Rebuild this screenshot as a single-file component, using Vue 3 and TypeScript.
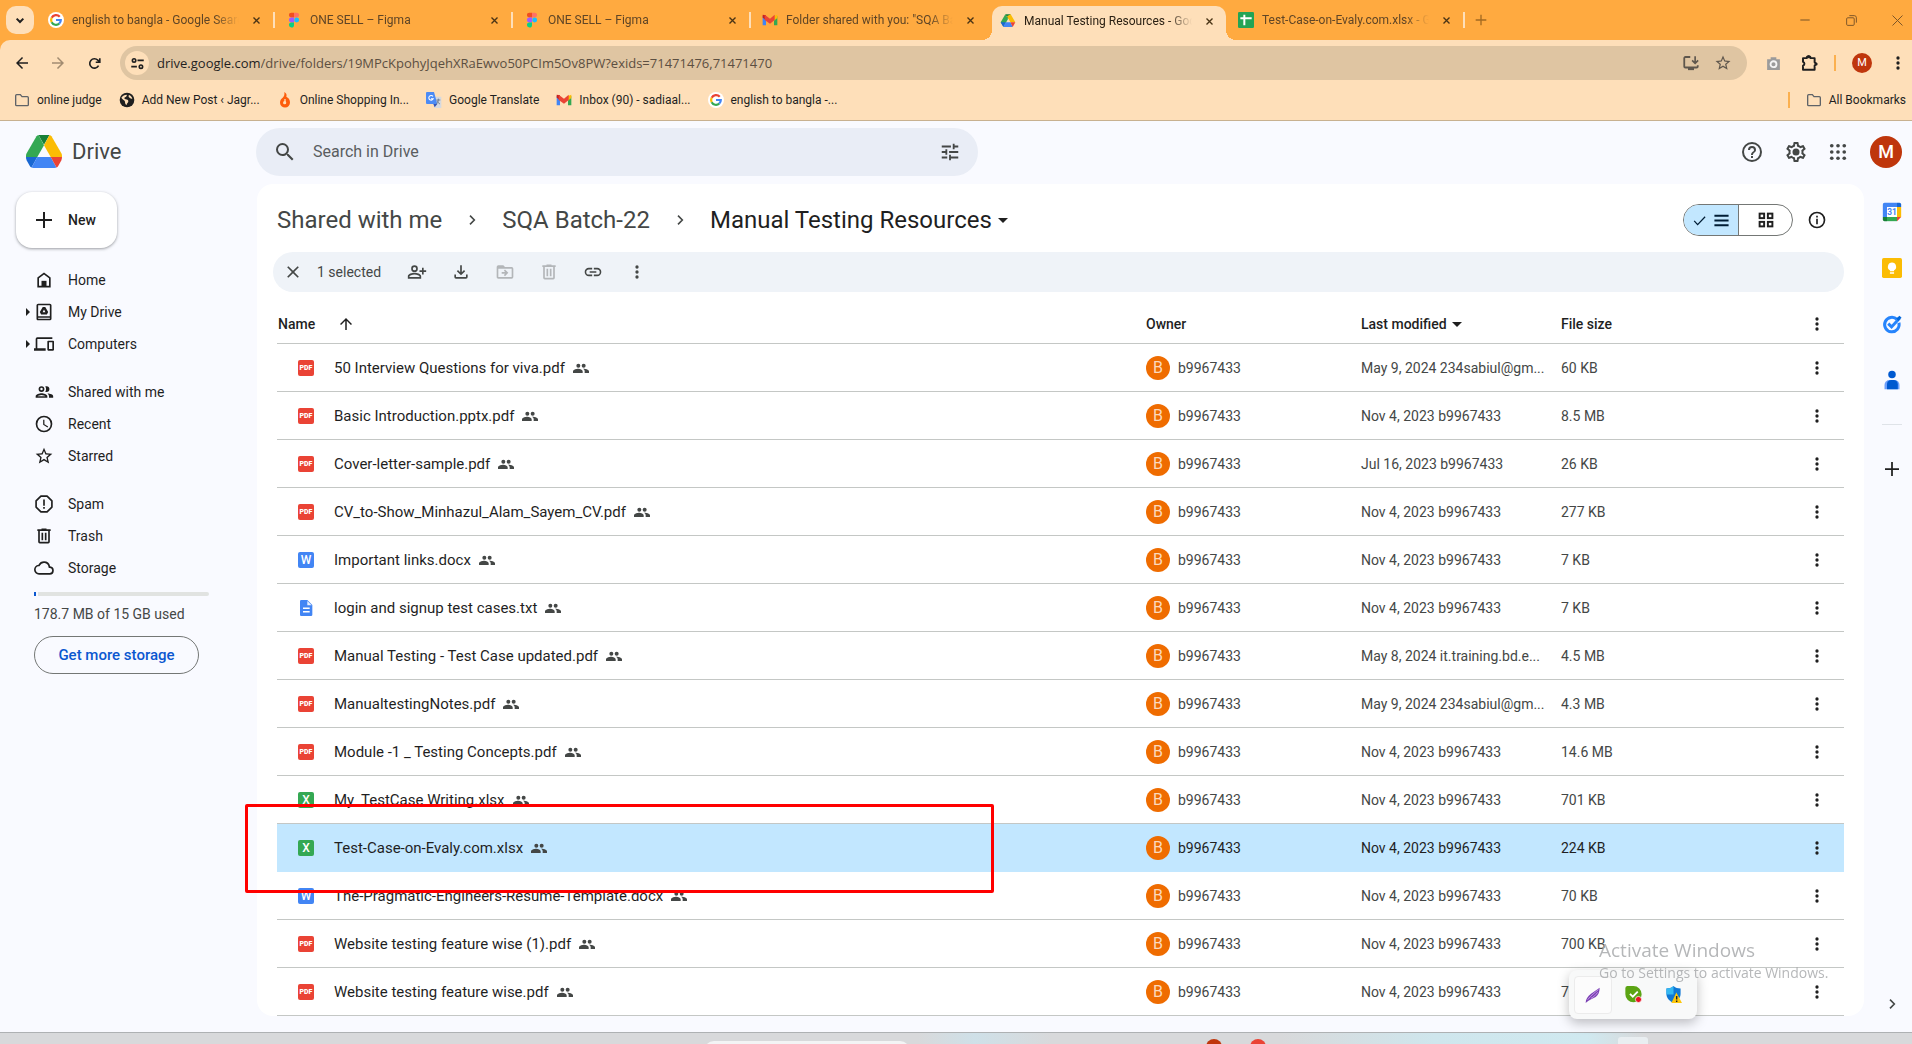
<script setup lang="ts">
import { h } from 'vue'

const art: Record<string, string> = {
  chevronDown: '<path d="M7 10l5 5 5-5" fill="none" stroke="currentColor" stroke-width="3"/>',
  chevronRight: '<path d="M9 5.500l6.500 6.500L9 18.500" fill="none" stroke="currentColor" stroke-width="2.400"/>',
  close: '<path d="M19 6.410L17.590 5 12 10.590 6.410 5 5 6.410 10.590 12 5 17.590 6.410 19 12 13.410 17.590 19 19 17.590 13.410 12z"/>',
  closeBold: '<path d="M4 4l16 16M20 4L4 20" fill="none" stroke="currentColor" stroke-width="3.600"/>',
  thinClose: '<path d="M4 4l16 16M20 4L4 20" fill="none" stroke="currentColor" stroke-width="1.600"/>',
  minimise: '<path d="M4 12h16" stroke="currentColor" stroke-width="1.800"/>',
  restore: '<g fill="none" stroke="currentColor" stroke-width="1.800"><rect x="3" y="7" width="14" height="14" rx="2"/><path d="M8 3h9a4 4 0 0 1 4 4v9"/></g>',
  plus: '<path d="M13 4h-2v7H4v2h7v7h2v-7h7v-2h-7z"/>',
  back: '<path d="M20 11H7.830l5.590-5.590L12 4l-8 8 8 8 1.410-1.410L7.830 13H20z"/>',
  forward: '<path d="M4 13h12.170l-5.590 5.590L12 20l8-8-8-8-1.410 1.410L16.170 11H4z"/>',
  up: '<path d="M11 20V7.830l-5.590 5.590L4 12l8-8 8 8-1.410 1.410L13 7.830V20z"/>',
  reload: '<path d="M18.500 15.500A7.500 7.500 0 1 1 17.300 6.700L20 9.400M20.500 3.500v6.500H14" fill="none" stroke="currentColor" stroke-width="2.600"/>',
  tuneSmall: '<g fill="none" stroke="currentColor" stroke-width="2.600"><circle cx="6.500" cy="7" r="2.700"/><path d="M12 7h10M2 17h9"/><circle cx="17.500" cy="17" r="2.700"/></g>',
  install: '<path d="M11 4H4.500A1.500 1.500 0 0 0 3 5.500v11A1.500 1.500 0 0 0 4.500 18h15a1.500 1.500 0 0 0 1.500-1.500V15" fill="none" stroke="currentColor" stroke-width="2.400"/><path d="M8 18h8v3.500H8z"/><path d="M17.500 3v9M13.500 8.500l4 4 4-4" fill="none" stroke="currentColor" stroke-width="2.200"/>',
  star: '<path d="M22 9.240l-7.190-.620L12 2 9.190 8.630 2 9.240l5.460 4.730L5.820 21 12 17.270 18.180 21l-1.630-7.030L22 9.240zM12 15.400l-3.760 2.270 1-4.280-3.320-2.880 4.380-.380L12 6.100l1.710 4.040 4.380.380-3.320 2.880 1 4.280L12 15.400z"/>',
  camera: '<path d="M8 3h8v3h5v15H3V6h5z"/><circle cx="12" cy="13" r="4.200" fill="none" stroke="#f4f4f4" stroke-width="2.600"/>',
  puzzle: '<path d="M4 5.500h5a2.500 2.500 0 0 1 5 0h5.500v5.500a2.500 2.500 0 0 1 0 4.500v5.500H4v-5.500a2.600 2.600 0 0 0 0-5z" fill="none" stroke="currentColor" stroke-width="2.600" stroke-linejoin="round"/><circle cx="11.500" cy="3.500" r="2"/><circle cx="21.500" cy="13.200" r="2"/>',
  dots: '<circle cx="12" cy="6" r="2"/><circle cx="12" cy="12" r="2"/><circle cx="12" cy="18" r="2"/>',
  folder: '<path d="M2.500 19V5.500A1.500 1.500 0 0 1 4 4h5.500l2.500 3h8a1.500 1.500 0 0 1 1.500 1.500V19a1.500 1.500 0 0 1-1.500 1.500H4A1.500 1.500 0 0 1 2.500 19z" fill="none" stroke="currentColor" stroke-width="2"/>',
  globe: '<circle cx="12" cy="12" r="11"/><path d="M3.500 8.500c2-3 5-4.500 8-4.500 1 2-1 3-2.500 4s-1 2.500 1 3 4 .5 4 3-2.500 2.500-2.500 5.500c-2-.5-2.500-3-2.500-5s-4-3-5.500-6zM15 4.500c2.500 1 4.500 3 5 5.500-2 .5-3.500-.5-5-2-.8-1-.8-2.500 0-3.500z" fill="#fedfb9"/>',
  fire: '<path d="M11 0c3 2 4 4 3 7 3 1.500 5.500 4 5.500 8.500a7.500 7.500 0 0 1-15 .5c0-3.500 1.500-6 4-7.500C11 6.500 11.500 4 11 0z" fill="#fd5d0c"/><path d="M12 10.500v7" stroke="#fedfb9" stroke-width="2"/><circle cx="11.500" cy="16" r="2.400" fill="#fedfb9"/>',
  google: '<circle cx="12" cy="12" r="12" fill="#fff"/><g fill="none" stroke-width="3.300"><path d="M17.600 7.100A7.300 7.300 0 0 0 5.500 8.700" stroke="#ea4335"/><path d="M5.500 8.700a7.300 7.300 0 0 0 0 6.600" stroke="#fbbc05"/><path d="M5.500 15.300a7.300 7.300 0 0 0 11.300 2.200" stroke="#34a853"/><path d="M16.800 17.500a7.300 7.300 0 0 0 2.400-5.500H12" stroke="#4285f4"/></g>',
  figma: '<path d="M8 1h4v7.330H8a3.660 3.660 0 0 1 0-7.330z" fill="#f24e1e"/><path d="M12 1h4a3.660 3.660 0 0 1 0 7.330h-4z" fill="#ff7262"/><path d="M8 8.330h4v7.330H8a3.660 3.660 0 0 1 0-7.330z" fill="#a259ff"/><circle cx="16" cy="12" r="3.700" fill="#1abcfe"/><path d="M8 15.660h4v3.670a3.800 3.800 0 1 1-4-3.670z" fill="#0acf83"/>',
  gmail: '<path d="M1 6v14h5V11z" fill="#4285f4"/><path d="M23 6v14h-5V11z" fill="#34a853"/><path d="M18 6l5-2v5l-5 4z" fill="#fbbc04"/><path d="M1 4l5 1v7L1 8.500z" fill="#c5221f"/><path d="M4 4l8 6 7-6v8l-7 5.500L4 12z" fill="#ea4335"/>',
  drive: '<path d="M8 2h8l-4 7z" fill="#188038"/><path d="M8 2l4 7-6.600 11.500L1 14z" fill="#34a853"/><path d="M16 2l7 12h-7.300L12 7.500 10.500 5z" fill="#fbbc04"/><path d="M1 14h7.500L5 21z" fill="#1967d2"/><path d="M8.300 14h7.400L19 21H5z" fill="#4285f4"/><path d="M15.700 14H23l-4 7z" fill="#ea4335"/>',
  driveLogo: '<path d="M14.500 2h11L20 11.800z" fill="#188038"/><path d="M14.500 2a3 3 0 0 0-2 1.300L2.500 20.500C2 21.500 2 23 2 24h11.300L20 12.200z" fill="#34a853"/><path d="M25.500 2a3 3 0 0 1 2 1.300l10 17.200c.5 1 .5 2.500.5 3.500H26.700L20 12.200z" fill="#fbbc04"/><path d="M2 24h11.300L7.500 34.500c-.7-.3-1.200-.8-1.700-1.500L2.700 27.500C2.200 26.500 2 25 2 24z" fill="#1967d2"/><path d="M13.300 24h13.400l5.800 10.500c-.5.300-1 .5-2 .5h-21c-1 0-1.500-.2-2-.5z" fill="#4285f4"/><path d="M38 24H26.700l5.800 10.500c.7-.3 1.200-.8 1.700-1.500l3.100-5.500c.5-1 .7-2.500.7-3.500z" fill="#ea4335"/>',
  sheets: '<rect width="24" height="24" rx="2" fill="#23a455"/><path d="M9.500 4v16M3.500 9.500h17" stroke="#fff" stroke-width="3" fill="none"/>',
  translate: '<path d="M9 7h14v17H13z" fill="#d5d9e0"/><path d="M1.500 0H12l5 18H1.500A1.500 1.500 0 0 1 0 16.500v-15A1.500 1.500 0 0 1 1.500 0z" fill="#4c8bf5"/><path d="M11 18h6l-4 5z" fill="#3455b5"/><path d="M10.500 6.500A3.500 3.500 0 1 0 11 10H7.500" fill="none" stroke="#fff" stroke-width="1.600"/><path d="M15.500 12h6M18.500 10v2c0 3-1 4-3 6M17 13c0 2 2 4 4 5" fill="none" stroke="#6b7a90" stroke-width="1.300"/>',
  search: '<path d="M15.500 14h-.790l-.280-.270A6.470 6.470 0 0 0 16 9.500 6.500 6.500 0 1 0 9.500 16c1.610 0 3.090-.590 4.230-1.570l.270.280v.790l5 4.990L20.490 19l-4.990-5zm-6 0a4.500 4.500 0 1 1 0-9 4.500 4.500 0 0 1 0 9z"/>',
  tune: '<path d="M3 17v2h6v-2H3zM3 5v2h10V5H3zm10 16v-2h8v-2h-8v-2h-2v6h2zM7 9v2H3v2h4v2h2V9H7zm14 4v-2H11v2h10zm-6-4h2V7h4V5h-4V3h-2v6z"/>',
  help: '<path d="M11 18h2v-2h-2v2zm1-16a10 10 0 1 0 0 20 10 10 0 0 0 0-20zm0 18a8 8 0 1 1 0-16 8 8 0 0 1 0 16zm0-14a4 4 0 0 0-4 4h2a2 2 0 1 1 4 0c0 2-3 1.750-3 5h2c0-2.250 3-2.500 3-5a4 4 0 0 0-4-4z"/>',
  gear: '<path d="M19.430 12.980c.040-.320.070-.640.070-.980s-.030-.660-.070-.980l2.110-1.650c.190-.150.240-.420.120-.640l-2-3.460a.500.500 0 0 0-.610-.220l-2.490 1c-.520-.400-1.080-.730-1.690-.980l-.380-2.650A.490.490 0 0 0 14 2h-4a.490.490 0 0 0-.490.420l-.380 2.650c-.610.250-1.170.590-1.690.980l-2.490-1a.500.500 0 0 0-.610.220l-2 3.460c-.130.220-.070.490.120.640l2.110 1.650a7.900 7.900 0 0 0 0 1.960l-2.110 1.650c-.190.150-.240.420-.120.640l2 3.460c.120.220.390.300.610.220l2.490-1c.520.400 1.080.730 1.690.980l.380 2.650c.030.240.240.420.490.420h4c.250 0 .460-.180.490-.420l.380-2.650c.610-.250 1.170-.590 1.690-.980l2.490 1c.230.090.490 0 .610-.220l2-3.460c.120-.220.070-.490-.120-.640l-2.110-1.650zm-1.980-1.710a5.500 5.500 0 0 1 0 1.460l-.140 1.130 1.970 1.540-.700 1.210-2.310-.930-.900.680c-.430.320-.840.560-1.250.730l-1.060.430-.360 2.480h-1.400l-.350-2.480-1.060-.430c-.430-.180-.830-.410-1.230-.710l-.910-.700-2.330.940-.700-1.210 1.970-1.540-.140-1.130a6 6 0 0 1 0-1.470l.140-1.130-1.970-1.540.700-1.210 2.310.930.900-.680c.430-.320.840-.560 1.250-.730l1.060-.430.360-2.480h1.390l.350 2.480 1.060.430c.430.180.830.410 1.230.710l.910.700 2.330-.940.700 1.210-1.960 1.550z"/><circle cx="12" cy="12" r="3.500"/>',
  apps: '<g><circle cx="4.500" cy="4.500" r="2.200"/><circle cx="12" cy="4.500" r="2.200"/><circle cx="19.500" cy="4.500" r="2.200"/><circle cx="4.500" cy="12" r="2.200"/><circle cx="12" cy="12" r="2.200"/><circle cx="19.500" cy="12" r="2.200"/><circle cx="4.500" cy="19.500" r="2.200"/><circle cx="12" cy="19.500" r="2.200"/><circle cx="19.500" cy="19.500" r="2.200"/></g>',
  home: '<path d="M12 3L4 9v12h16V9zm6 16H6v-9l6-4.500L18 10z"/><path d="M9 13h6v7H9z"/>',
  myDrive: '<path d="M19 2H5a2 2 0 0 0-2 2v16c0 1.100.9 2 2 2h14a2 2 0 0 0 2-2V4a2 2 0 0 0-2-2zm0 18H5v-1h14zm0-3H5V4h14z"/><path d="M10.500 6h3l3.500 6-1.500 3h-7L7 12zm1.500 3l-1.700 3.200h3.400z" fill-rule="evenodd"/>',
  computers: '<path d="M4 6h18V4H4a2 2 0 0 0-2 2v11H0v3h14v-3H4V6zm19 2h-6c-.550 0-1 .450-1 1v10c0 .550.450 1 1 1h6c.550 0 1-.450 1-1V9c0-.550-.450-1-1-1zm-1 10h-4v-8h4z"/>',
  people: '<path d="M9 13.500c-2.340 0-7 1.170-7 3.500V19h14v-2c0-2.330-4.660-3.500-7-3.500zM4.340 17c.840-.580 2.870-1.500 4.660-1.500s3.820.920 4.660 1.500zM9 12a3.500 3.500 0 1 0 0-7 3.500 3.500 0 0 0 0 7zm0-5a1.500 1.500 0 1 1 0 3 1.500 1.500 0 0 1 0-3zm7.040 6.810c1.160.840 1.960 1.960 1.960 3.190v2h5v-2c0-2.020-3.500-3.170-6.960-3.190zM15 12a3.500 3.500 0 1 0 0-7c-.540 0-1.040.130-1.500.350.630.890 1 1.980 1 3.150s-.370 2.260-1 3.150c.460.220.960.350 1.500.350z"/>',
  clock: '<path d="M12 2a10 10 0 1 0 0 20 10 10 0 0 0 0-20zm0 18a8 8 0 1 1 0-16 8 8 0 0 1 0 16zm.5-13H11v6l5.200 3.200.8-1.300-4.500-2.700z"/>',
  spam: '<path d="M8.300 2.500h7.400L21.500 8.300v7.400l-5.800 5.800H8.300l-5.800-5.800V8.300z" fill="none" stroke="currentColor" stroke-width="2" stroke-linejoin="round"/><path d="M11 6.500h2V14h-2zM11 15.700h2v2h-2z"/>',
  trash: '<path d="M15 4V3H9v1H4v2h1v13a2 2 0 0 0 2 2h10a2 2 0 0 0 2-2V6h1V4zm2 15H7V6h10zM9 8h2v9H9zm4 0h2v9h-2z"/>',
  cloud: '<path d="M19.350 10.040A7.490 7.490 0 0 0 12 4a7.500 7.500 0 0 0-6.650 4.040A6 6 0 0 0 6 20h13a5 5 0 0 0 .350-9.960zM19 18H6a4 4 0 0 1-.440-7.970l1.070-.110.500-.950A5.480 5.480 0 0 1 17.390 10.430l.300 1.500 1.530.110A3 3 0 0 1 19 18z"/>',
  personAdd: '<path d="M9 12a4 4 0 1 0 0-8 4 4 0 0 0 0 8zm0-6a2 2 0 1 1 0 4 2 2 0 0 1 0-4zm0 7c-2.670 0-8 1.340-8 4v3h16v-3c0-2.660-5.330-4-8-4zm6 5H3v-1c0-.640 3.100-2 6-2s6 1.360 6 2zm5-8V7h-2v3h-3v2h3v3h2v-3h3v-2z"/>',
  download: '<path d="M11 4h2v8.200l2.600-2.600L17 11l-5 5-5-5 1.400-1.400 2.600 2.600zM4 15h2v3h12v-3h2v3a2 2 0 0 1-2 2H6a2 2 0 0 1-2-2z"/>',
  move: '<path d="M20 6h-8l-2-2H4a2 2 0 0 0-2 2v12c0 1.100.9 2 2 2h16a2 2 0 0 0 2-2V8a2 2 0 0 0-2-2zm0 12H4V8h16zm-8-1l4-4-4-4-1.400 1.400 1.600 1.600H8v2h4.200l-1.600 1.600z"/>',
  link: '<path d="M3.900 12A3.100 3.100 0 0 1 7 8.900h4V7H7a5 5 0 0 0 0 10h4v-1.900H7A3.100 3.100 0 0 1 3.900 12zM8 13h8v-2H8zm9-6h-4v1.900h4a3.100 3.100 0 0 1 0 6.200h-4V17h4a5 5 0 0 0 0-10z"/>',
  check: '<path d="M3.500 12.500l5.500 6L21 6" fill="none" stroke="currentColor" stroke-width="2"/>',
  list: '<path d="M2 4h20v2.800H2zM2 10.600h20v2.800H2zM2 17.200h20V20H2z"/>',
  grid: '<g fill="none" stroke="currentColor" stroke-width="2.600"><rect x="3.500" y="3.500" width="6" height="6"/><rect x="14.500" y="3.500" width="6" height="6"/><rect x="3.500" y="14.500" width="6" height="6"/><rect x="14.500" y="14.500" width="6" height="6"/></g>',
  info: '<path d="M11 10.500h2V17h-2zM11 7h2v2h-2zm1-5a10 10 0 1 0 0 20 10 10 0 0 0 0-20zm0 18a8 8 0 1 1 0-16 8 8 0 0 1 0 16z"/>',
  group: '<path d="M8 11.500a3 3 0 1 0 0-6 3 3 0 0 0 0 6zm8 0a3 3 0 1 0 0-6 3 3 0 0 0 0 6zM8 13.200c-2.700 0-8 1.300-8 3.800v2.500h14.500V17c0-2.500-4-3.800-6.500-3.800zm8 0h-1.200c1.800 1 2.700 2.200 2.700 3.800v2.500H24V17c0-2.500-5.300-3.800-8-3.800z"/>',
  doc: '<path d="M14 0H5a2 2 0 0 0-2 2v20c0 1.100.9 2 2 2h14.500a2 2 0 0 0 2-2V7.500z" fill="#4285f4"/><path d="M14 1.500V8h6.500z" fill="#e8f0fe"/><path d="M7.500 12.500h10M7.500 17.500h10" stroke="#fff" stroke-width="2.200"/>',
  calendar: '<path d="M1 3a2 2 0 0 1 2-2h15v5H6v12H1z" fill="#4285f4"/><path d="M18 1h3a2 2 0 0 1 2 2v3h-5z" fill="#1967d2"/><path d="M18 6h5v12h-5z" fill="#fbbc04"/><path d="M6 18h12v5H6z" fill="#34a853"/><path d="M1 18h5v5H3a2 2 0 0 1-2-2z" fill="#188038"/><path d="M18 18h5l-5 5z" fill="#ea4335"/><path d="M6 6h12v12H6z" fill="#fff"/><text x="12" y="15.500" text-anchor="middle" font-size="10" font-weight="700" fill="#4285f4">31</text>',
  keep: '<rect width="24" height="24" rx="2" fill="#fbbc04"/><path d="M12 5.500a5 5 0 0 0-2.500 9.300V16h5v-1.200A5 5 0 0 0 12 5.500zM9.500 17.200h5V19h-5z" fill="#fff"/>',
  tasks: '<path d="M18 6.500a8.700 8.700 0 1 0 2.300 4" fill="none" stroke="#2684fc" stroke-width="3.600"/><path d="M7.500 11.500l4 4L21 5" fill="none" stroke="#2684fc" stroke-width="3.600"/><path d="M17 5.500l4-3.500 2.500 2.500-4 4z" fill="#0066da"/>',
  contact: '<circle cx="12" cy="5.500" r="4.500" fill="#0059d0"/><path d="M3 23v-5a6 6 0 0 1 6-6h6a6 6 0 0 1 6 6v5z" fill="#6d9ffb"/><path d="M6 23v-6a5 5 0 0 1 5-5h3a5 5 0 0 1 5 5v6z" fill="#0059d0"/>',
  feather: '<path d="M1 24c0-6 3-10 8-14 4-3 9-6 13-9 0 6-2 11-6 14-5 3-10 4-15 9z" fill="#7d44b5"/><path d="M4 19C9 13 15 8 20 4M9 17c4-2 7-5 10-9" stroke="#c79ae8" stroke-width="1.400" fill="none"/>',
  greenCheck: '<path d="M3 0h9a11.500 11.500 0 1 1-11.500 11.500V3A3 3 0 0 1 3 0z" fill="#5ba413"/><path d="M7 11l4 4 7-7" stroke="#fff" stroke-width="2.600" fill="none"/><circle cx="19" cy="19" r="4.300" fill="#e81123" stroke="#fff"/>',
  shield: '<path d="M12 0c3 2.500 6 3.500 10 3.500V11c0 6-4 10-10 13C6 21 2 17 2 11V3.500C6 3.500 9 2.500 12 0z" fill="#0f77d4"/><path d="M12 0v12H2V3.500C6 3.500 9 2.500 12 0z" fill="#35b8f1"/><path d="M16 9l8 15H9z" fill="#fdc70c"/><path d="M16.500 14v5M16.500 20.500v2" stroke="#222" stroke-width="2"/>'
}

const Icon = (props: { name: string; size?: number; box?: string }) =>
  h('svg', {
    width: props.size ?? 20,
    height: props.size ?? 20,
    viewBox: props.box ?? '0 0 24 24',
    fill: 'currentColor',
    'aria-hidden': 'true',
    innerHTML: art[props.name]
  })
Icon.props = ['name', 'size', 'box']

const tabs = [
  { icon: 'google', title: 'english to bangla - Google Search' },
  { icon: 'figma', title: 'ONE SELL – Figma' },
  { icon: 'figma', title: 'ONE SELL – Figma' },
  { icon: 'gmail', title: 'Folder shared with you: "SQA Batch-22"' },
  { icon: 'drive', title: 'Manual Testing Resources - Google Drive', active: true },
  { icon: 'sheets', title: 'Test-Case-on-Evaly.com.xlsx - Google Sheets' }
]

const bookmarks = [
  { icon: 'folder', label: 'online judge' },
  { icon: 'globe', label: 'Add New Post ‹ Jagr...' },
  { icon: 'fire', label: 'Online Shopping In...' },
  { icon: 'translate', label: 'Google Translate' },
  { icon: 'gmail', label: 'Inbox (90) - sadiaal...' },
  { icon: 'google', label: 'english to bangla -...' }
]

const navGroups = [
  [
    { icon: 'home', label: 'Home' },
    { icon: 'myDrive', label: 'My Drive', expandable: true },
    { icon: 'computers', label: 'Computers', expandable: true }
  ],
  [
    { icon: 'people', label: 'Shared with me' },
    { icon: 'clock', label: 'Recent' },
    { icon: 'star', label: 'Starred' }
  ],
  [
    { icon: 'spam', label: 'Spam' },
    { icon: 'trash', label: 'Trash' },
    { icon: 'cloud', label: 'Storage' }
  ]
]

const actions = [
  { icon: 'personAdd', label: 'Share' },
  { icon: 'download', label: 'Download' },
  { icon: 'move', label: 'Move', disabled: true },
  { icon: 'trash', label: 'Remove', disabled: true },
  { icon: 'link', label: 'Copy link' },
  { icon: 'dots', label: 'More actions' }
]

type Kind = 'pdf' | 'word' | 'text' | 'excel'
interface FileRow {
  name: string
  kind: Kind
  modified: string
  size: string
  selected?: boolean
}

const badge: Record<Kind, string> = { pdf: 'PDF', word: 'W', text: '', excel: 'X' }

const files: FileRow[] = [
  { name: '50 Interview Questions for viva.pdf', kind: 'pdf', modified: 'May 9, 2024 234sabiul@gm...', size: '60 KB' },
  { name: 'Basic Introduction.pptx.pdf', kind: 'pdf', modified: 'Nov 4, 2023 b9967433', size: '8.5 MB' },
  { name: 'Cover-letter-sample.pdf', kind: 'pdf', modified: 'Jul 16, 2023 b9967433', size: '26 KB' },
  { name: 'CV_to-Show_Minhazul_Alam_Sayem_CV.pdf', kind: 'pdf', modified: 'Nov 4, 2023 b9967433', size: '277 KB' },
  { name: 'Important links.docx', kind: 'word', modified: 'Nov 4, 2023 b9967433', size: '7 KB' },
  { name: 'login and signup test cases.txt', kind: 'text', modified: 'Nov 4, 2023 b9967433', size: '7 KB' },
  { name: 'Manual Testing - Test Case updated.pdf', kind: 'pdf', modified: 'May 8, 2024 it.training.bd.e...', size: '4.5 MB' },
  { name: 'ManualtestingNotes.pdf', kind: 'pdf', modified: 'May 9, 2024 234sabiul@gm...', size: '4.3 MB' },
  { name: 'Module -1 _ Testing Concepts.pdf', kind: 'pdf', modified: 'Nov 4, 2023 b9967433', size: '14.6 MB' },
  { name: 'My_TestCase Writing.xlsx', kind: 'excel', modified: 'Nov 4, 2023 b9967433', size: '701 KB' },
  { name: 'Test-Case-on-Evaly.com.xlsx', kind: 'excel', modified: 'Nov 4, 2023 b9967433', size: '224 KB', selected: true },
  { name: 'The-Pragmatic-Engineers-Resume-Template.docx', kind: 'word', modified: 'Nov 4, 2023 b9967433', size: '70 KB' },
  { name: 'Website testing feature wise (1).pdf', kind: 'pdf', modified: 'Nov 4, 2023 b9967433', size: '700 KB' },
  { name: 'Website testing feature wise.pdf', kind: 'pdf', modified: 'Nov 4, 2023 b9967433', size: '700 KB' }
]

const sideApps = [
  { icon: 'calendar', label: 'Calendar' },
  { icon: 'keep', label: 'Keep' },
  { icon: 'tasks', label: 'Tasks' },
  { icon: 'contact', label: 'Contacts' }
]
</script>

<template>
  <div class="screen">
    <header class="browser">
      <div class="tabstrip">
        <button class="tab-search" aria-label="Search tabs"><Icon name="chevronDown" :size="16" /></button>
        <div v-for="(tab, i) in tabs" :key="i" class="tab" :class="{ active: tab.active, bare: tabs[i + 1]?.active }">
          <Icon :name="tab.icon" :size="16" />
          <span class="tab-title">{{ tab.title }}</span>
          <button class="tab-close" aria-label="Close tab"><Icon name="closeBold" :size="9" /></button>
        </div>
        <button class="new-tab" aria-label="New tab"><Icon name="plus" :size="16" /></button>
        <div class="window-controls">
          <button aria-label="Minimise"><Icon name="minimise" :size="14" /></button>
          <button aria-label="Restore"><Icon name="restore" :size="13" /></button>
          <button aria-label="Close"><Icon name="thinClose" :size="15" /></button>
        </div>
      </div>

      <div class="toolbar">
        <button class="tool" aria-label="Back"><Icon name="back" :size="18" /></button>
        <button class="tool dim" aria-label="Forward"><Icon name="forward" :size="18" /></button>
        <button class="tool" aria-label="Reload"><Icon name="reload" :size="15" /></button>
        <div class="omnibox">
          <button class="site-info" aria-label="Site information"><Icon name="tuneSmall" :size="15" /></button>
          <label class="host" for="address">drive.google.com</label>
          <input id="address" class="address" type="text" value="/drive/folders/19MPcKpohyJqehXRaEwvo50PCIm5Ov8PW?exids=71471476,71471470" />
          <button class="omni-action" aria-label="Install app"><Icon name="install" :size="18" /></button>
          <button class="omni-action" aria-label="Bookmark"><Icon name="star" :size="18" /></button>
        </div>
        <div class="extensions">
          <button class="ext camera" aria-label="Screenshot"><Icon name="camera" :size="17" /></button>
          <button class="ext" aria-label="Extensions"><Icon name="puzzle" :size="18" /></button>
          <span class="bar"></span>
          <button class="profile" aria-label="Profile">M</button>
          <button class="ext" aria-label="Menu"><Icon name="dots" :size="20" /></button>
        </div>
      </div>

      <nav class="bookmarks">
        <a v-for="b in bookmarks" :key="b.label" href="#" class="bookmark" :class="b.icon">
          <Icon :name="b.icon" :size="16" />{{ b.label }}
        </a>
        <span class="bar push"></span>
        <a href="#" class="bookmark folder"><Icon name="folder" :size="16" />All Bookmarks</a>
      </nav>
    </header>

    <div class="drive">
      <header class="drive-header">
        <a href="#" class="brand"><Icon name="driveLogo" :size="40" box="0 0 40 38" />Drive</a>
        <form class="search" @submit.prevent>
          <Icon name="search" :size="24" />
          <input type="search" placeholder="Search in Drive" aria-label="Search in Drive" />
          <button type="button" aria-label="Advanced search"><Icon name="tune" :size="22" /></button>
        </form>
        <div class="account">
          <button aria-label="Help"><Icon name="help" :size="24" /></button>
          <button aria-label="Settings"><Icon name="gear" :size="24" /></button>
          <button aria-label="Google apps"><Icon name="apps" :size="20" /></button>
          <button class="avatar" aria-label="Account">M</button>
        </div>
      </header>

      <div class="workspace">
        <aside class="sidebar">
          <button class="new"><Icon name="plus" :size="18" box="3 3 18 18" />New</button>
          <nav>
            <ul v-for="(group, g) in navGroups" :key="g">
              <li v-for="item in group" :key="item.label">
                <a href="#">
                  <span class="expander" :class="{ shown: item.expandable }"></span>
                  <Icon :name="item.icon" />{{ item.label }}
                </a>
              </li>
            </ul>
          </nav>
          <div class="storage">
            <div class="meter"><span></span></div>
            <p>178.7 MB of 15 GB used</p>
            <button>Get more storage</button>
          </div>
        </aside>

        <main class="panel">
          <div class="heading">
            <nav class="crumbs">
              <a href="#">Shared with me</a>
              <Icon name="chevronRight" :size="16" />
              <a href="#">SQA Batch-22</a>
              <Icon name="chevronRight" :size="16" />
              <button class="current">Manual Testing Resources<i class="caret"></i></button>
            </nav>
            <div class="views">
              <button class="on" aria-label="List layout" aria-pressed="true"><Icon name="check" :size="15" /><Icon name="list" :size="17" /></button>
              <button aria-label="Grid layout" aria-pressed="false"><Icon name="grid" :size="18" /></button>
            </div>
            <button class="info" aria-label="View details"><Icon name="info" /></button>
          </div>

          <div class="selection">
            <button aria-label="Clear selection"><Icon name="close" /></button>
            <span>1 selected</span>
            <button v-for="a in actions" :key="a.label" :aria-label="a.label" :disabled="a.disabled"><Icon :name="a.icon" /></button>
          </div>

          <table>
            <colgroup><col /><col class="c-owner" /><col class="c-modified" /><col class="c-size" /><col class="c-more" /></colgroup>
            <thead>
              <tr>
                <th scope="col"><span class="sort">Name<Icon name="up" :size="18" /></span></th>
                <th scope="col">Owner</th>
                <th scope="col">Last modified<i class="caret"></i></th>
                <th scope="col">File size</th>
                <th scope="col"><button class="more" aria-label="Column options"><Icon name="dots" /></button></th>
              </tr>
            </thead>
            <tbody>
              <tr v-for="f in files" :key="f.name" :class="{ selected: f.selected }">
                <td>
                  <div class="file">
                    <Icon v-if="f.kind === 'text'" name="doc" :size="16" />
                    <span v-else class="badge" :class="f.kind">{{ badge[f.kind] }}</span>
                    <span class="file-name">{{ f.name }}</span>
                    <Icon name="group" :size="16" class="shared" />
                  </div>
                </td>
                <td><div class="owner"><span class="initial">B</span>b9967433</div></td>
                <td>{{ f.modified }}</td>
                <td>{{ f.size }}</td>
                <td><button class="more" aria-label="More actions"><Icon name="dots" /></button></td>
              </tr>
            </tbody>
          </table>
        </main>

        <aside class="apps">
          <button v-for="a in sideApps" :key="a.icon" :aria-label="a.label"><Icon :name="a.icon" /></button>
          <hr />
          <button class="add" aria-label="Get add-ons"><Icon name="plus" :size="18" box="4 4 16 16" /></button>
          <button class="collapse" aria-label="Hide side panel"><Icon name="chevronRight" :size="16" /></button>
        </aside>
      </div>
    </div>

    <footer class="taskbar">
      <span class="task-search"></span>
      <span class="task-dot"></span>
      <span class="task-dot light"></span>
      <span class="task-tile"></span>
    </footer>

    <div class="highlight"></div>
    <div class="tray">
      <button class="on" aria-label="Pen tool"><Icon name="feather" :size="16" /></button>
      <button aria-label="Antivirus"><Icon name="greenCheck" :size="17" /></button>
      <button aria-label="Windows Security"><Icon name="shield" :size="17" /></button>
    </div>
    <div class="watermark">
      <p class="wm-title">Activate Windows</p>
      <p>Go to Settings to activate Windows.</p>
    </div>
  </div>
</template>

<style>
body {
  margin: 0;
}
</style>

<style scoped>
.screen {
  position: relative;
  min-height: 100vh;
  overflow: hidden;
  display: flex;
  flex-direction: column;
  background: #f8fafd;
  color: #1f1f1f;
  font-family: Roboto, "Liberation Sans", sans-serif;
  font-size: 14px;
  line-height: 20px;
}
.screen *,
.screen *::before,
.screen *::after {
  box-sizing: border-box;
}
button {
  display: inline-flex;
  align-items: center;
  justify-content: center;
  flex: none;
  padding: 0;
  border: 0;
  background: none;
  color: inherit;
  font: inherit;
}
a {
  color: inherit;
  text-decoration: none;
}
svg {
  flex: none;
  display: block;
}
p,
ul {
  margin: 0;
  padding: 0;
  list-style: none;
}
input {
  min-width: 0;
  padding: 0;
  border: 0;
  outline: 0;
  background: none;
  color: inherit;
  font: inherit;
}

/* Browser frame */
.browser {
  background: #ffaa40;
  font-size: 12px;
  line-height: 16px;
}
.tabstrip {
  display: flex;
  align-items: center;
  height: 40px;
  padding-left: 6px;
}
.tab-search {
  width: 28px;
  height: 28px;
  margin-right: 3px;
  border-radius: 10px;
  background: #fedfb9;
}
.tab {
  position: relative;
  flex: 0 1 238px;
  min-width: 0;
  display: flex;
  align-items: center;
  gap: 8px;
  height: 28px;
  padding: 0 14px 0 11px;
  color: #5f4526;
}
.tab::after {
  content: "";
  position: absolute;
  right: 0;
  top: 6px;
  width: 2px;
  height: 16px;
  background: #fedfb9;
}
.tab.bare::after {
  display: none;
}
.tab-title {
  flex: 1;
  min-width: 0;
  margin-right: 4px;
  overflow: hidden;
  white-space: nowrap;
  mask-image: linear-gradient(to right, #000 calc(100% - 24px), transparent);
}
.tab-close {
  width: 10px;
  height: 16px;
  color: #4a3415;
}
.tab.active {
  align-self: flex-end;
  height: 34px;
  margin: 0 1px 0 3px;
  padding: 0 12px 4px 8px;
  flex-basis: 234px;
  border-radius: 10px 10px 0 0;
  background: #fedfb9;
  color: #2b2114;
}
.tab.active::before,
.tab.active::after {
  content: "";
  position: absolute;
  top: auto;
  bottom: 0;
  width: 10px;
  height: 10px;
}
.tab.active::before {
  left: -10px;
  background: radial-gradient(circle at 0 0, transparent 10px, #fedfb9 10px);
}
.tab.active::after {
  right: -10px;
  background: radial-gradient(circle at 100% 0, transparent 10px, #fedfb9 10px);
}
.new-tab {
  width: 32px;
  color: #a36a21;
}
.window-controls {
  display: flex;
  margin-left: auto;
  color: #7d5628;
}
.window-controls button {
  width: 46px;
  height: 40px;
}
.window-controls button:last-child {
  width: 38px;
  padding-left: 8px;
}
.toolbar {
  display: flex;
  align-items: center;
  height: 40px;
  padding: 6px 4px 0;
  border-radius: 10px 0 0;
  background: #fedfb9;
}
.tool {
  width: 36px;
  height: 34px;
  color: #1f1f1f;
}
.dim {
  color: #a28c71;
}
.omnibox {
  flex: 1;
  display: flex;
  align-items: center;
  height: 34px;
  margin-left: 8px;
  padding: 0 8px 0 5px;
  border-radius: 17px;
  background: #dfc5a2;
  font-family: "Open Sans", "Noto Sans", sans-serif;
  font-size: 13px;
  line-height: 20px;
}
.site-info {
  width: 24px;
  height: 24px;
  margin-right: 8px;
  border-radius: 50%;
  background: #fedfb9;
}
.address {
  flex: 1;
  height: 20px;
  color: #5c4f41;
}
.omni-action {
  width: 32px;
  color: #5f574d;
}
.extensions {
  display: flex;
  align-items: center;
  margin-left: 8px;
}
.ext {
  width: 36px;
  height: 34px;
}
.ext:last-child {
  width: 20px;
}
.camera {
  color: #9b9b9b;
}
.bar {
  width: 2px;
  height: 16px;
  margin: 0 16px 0 7px;
  background: #fbb04f;
}
.profile {
  width: 20px;
  height: 20px;
  margin-right: 16px;
  border-radius: 50%;
  background: #bf360c;
  color: #fff;
  font-size: 11px;
}
.bookmarks {
  display: flex;
  align-items: center;
  height: 41px;
  padding: 0 6px 0 14px;
  background: #fedfb9;
  border-bottom: 1px solid #c8b190;
}
.bookmark {
  display: flex;
  align-items: center;
  gap: 7px;
  margin-right: 17px;
}
.bookmark.folder svg {
  color: #5f6368;
}
.bookmark:last-child {
  margin-right: 0;
}
.push {
  margin-left: auto;
}

/* Drive header */
.drive {
  flex: 1;
  display: flex;
  flex-direction: column;
  background: #f9faff;
}
.drive-header {
  display: flex;
  align-items: center;
  padding: 7px 10px 8px 24px;
  color: #444746;
}
.brand {
  display: flex;
  align-items: center;
  gap: 8px;
  width: 232px;
  font-size: 22px;
  line-height: 28px;
}
.search {
  flex: 0 1 722px;
  display: flex;
  align-items: center;
  gap: 16px;
  height: 48px;
  padding: 0 17px;
  border-radius: 24px;
  background: #e9edf6;
  font-size: 16px;
}
.search input {
  flex: 1;
  appearance: none;
}
.search input::placeholder {
  color: #5a5d60;
  opacity: 1;
}
.account {
  display: flex;
  align-items: center;
  gap: 20px;
  margin-left: auto;
}
.avatar {
  width: 32px;
  height: 32px;
  margin-left: 2px;
  border-radius: 50%;
  background: #bf360c;
  color: #fff;
  font-size: 18px;
  font-weight: 500;
}

/* Sidebar */
.workspace {
  flex: 1;
  display: grid;
  grid-template-columns: 257px minmax(0, 1fr) 48px;
  padding-bottom: 16px;
}
.sidebar {
  padding: 8px 16px 0;
}
.new {
  justify-content: flex-start;
  gap: 15px;
  width: 101px;
  height: 56px;
  margin-bottom: 16px;
  padding-left: 19px;
  border-radius: 16px;
  background: #fff;
  box-shadow: 0 1px 3px rgba(60, 64, 67, 0.5);
  font-weight: 500;
}
.sidebar ul {
  margin-bottom: 16px;
}
.sidebar li a {
  display: flex;
  align-items: center;
  gap: 14px;
  height: 32px;
}
.expander {
  width: 4px;
  margin: 0 -14px 0 10px;
  border: 4px solid transparent;
  border-width: 4px 0 4px 4px;
}
.sidebar li a svg {
  margin-left: 4px;
}
.expander.shown {
  border-left-color: #1f1f1f;
}
.storage {
  margin: -8px 32px 0 18px;
  color: #444746;
}
.meter {
  display: flex;
  gap: 2px;
  height: 4px;
}
.meter span {
  width: 2px;
  background: #0b57d0;
}
.meter::after {
  content: "";
  flex: 1;
  border-radius: 0 2px 2px 0;
  background: #e1e3e1;
}
.storage p {
  margin: 8px 0 12px;
}
.storage button {
  width: 165px;
  height: 38px;
  border: 1px solid #747775;
  border-radius: 19px;
  color: #0b57d0;
  font-size: 15px;
  font-weight: 500;
}

/* File panel */
.panel {
  border-radius: 16px;
  background: #fff;
}
.heading {
  display: flex;
  align-items: center;
  height: 68px;
  padding: 4px 37px 0 20px;
}
.crumbs {
  display: flex;
  align-items: center;
  flex: 1;
  gap: 22px;
  color: #444746;
  font-size: 24px;
  line-height: 32px;
}
.current {
  color: #1f1f1f;
}
.caret {
  display: inline-block;
  margin-left: 6px;
  border: 5px solid transparent;
  border-top-color: #1f1f1f;
  border-bottom: 0;
}
.views {
  display: flex;
  height: 32px;
  margin-right: 14px;
  border: 1px solid #747775;
  border-radius: 16px;
  overflow: hidden;
}
.views button {
  gap: 6px;
  width: 53px;
}
.views .on {
  width: 55px;
  border-right: 1px solid #747775;
  background: #c2e7ff;
  color: #001d35;
}
.selection {
  display: flex;
  align-items: center;
  height: 40px;
  margin: 0 20px 0 16px;
  padding-left: 10px;
  border-radius: 20px;
  background: #eff3f8;
  color: #444746;
}
.selection span {
  margin: 0 26px 0 14px;
}
.selection button {
  margin-right: 24px;
}
.selection button:first-child {
  margin: 0;
}
.selection button:disabled {
  color: #b3b6b9;
}
table {
  width: calc(100% - 40px);
  margin: 0 20px;
  table-layout: fixed;
  border-spacing: 0;
}
.c-owner {
  width: 215px;
}
.c-modified {
  width: 200px;
}
.c-size {
  width: 229px;
}
.c-more {
  width: 54px;
}
th {
  height: 52px;
  padding: 12px 0 0;
  border-bottom: 1px solid #c4c7c5;
  font-weight: 500;
  text-align: left;
}
.sort {
  display: flex;
  align-items: center;
  gap: 22px;
  padding-left: 1px;
}
th .caret {
  margin: 0 0 2px 5px;
}
td {
  height: 48px;
  padding: 0;
  border-bottom: 1px solid #c4c7c5;
  color: #444746;
  white-space: nowrap;
}
.file {
  display: flex;
  align-items: center;
  padding-left: 21px;
  color: #1f1f1f;
  font-size: 15px;
}
.file-name {
  margin: 0 8px 0 20px;
}
.shared {
  color: #444746;
}
.badge {
  width: 16px;
  height: 16px;
  border-radius: 2px;
  color: #fff;
  font-size: 12px;
  font-weight: 500;
  line-height: 16px;
  text-align: center;
}
.pdf {
  background: #ea4335;
  font-size: 7px;
  font-weight: 900;
}
.word {
  background: #4285f4;
}
.excel {
  background: #34a853;
}
.owner {
  display: flex;
  align-items: center;
  gap: 8px;
}
.initial {
  width: 24px;
  height: 24px;
  border-radius: 50%;
  background: #ef6c00;
  color: #fbd9bd;
  font-size: 16px;
  line-height: 24px;
  text-align: center;
}
.more {
  display: flex;
  width: 54px;
  height: 24px;
  color: #1f1f1f;
}
.selected td {
  border-color: #c2e7ff;
  background: #c2e7ff;
  color: #1f1f1f;
}

/* Side panel */
.apps {
  display: flex;
  flex-direction: column;
  align-items: center;
  gap: 36px;
  padding: 18px 0 4px 8px;
}
.apps hr {
  width: 20px;
  margin: -2px 0 0;
  border: 0;
  border-top: 1px solid #dfe3e8;
}
.add {
  width: 20px;
  height: 16px;
}
.add svg {
  width: 14px;
}
.collapse {
  margin-top: auto;
  color: #444746;
}

/* Desktop layer */
.taskbar {
  position: relative;
  height: 12px;
  border-top: 1px solid #aeb1b3;
  background: linear-gradient(to right, #d8d9db 0 48%, #cfe0e8 51%, #d8d9db 55% 67%, #cfe6ed 75%, #d0e9f0 83%, #d8d9db 86%);
}
.taskbar span {
  position: absolute;
}
.task-search {
  left: 704px;
  top: 8px;
  width: 206px;
  height: 20px;
  border-radius: 10px;
  background: #f3f4f5;
}
.task-dot {
  left: 1206px;
  top: 6px;
  width: 16px;
  height: 16px;
  border-radius: 50%;
  background: #bf360c;
}
.task-dot.light {
  left: 1250px;
  background: #ea4335;
}
.task-tile {
  left: 1618px;
  top: 4px;
  width: 30px;
  height: 20px;
  border-radius: 3px;
  background: #e9eef1;
}
.highlight {
  position: absolute;
  left: 245px;
  top: 804px;
  width: 749px;
  height: 89px;
  border: 3px solid #f00;
  border-radius: 2px;
}
.tray {
  position: absolute;
  left: 1569px;
  top: 970px;
  display: flex;
  align-items: center;
  gap: 2px;
  width: 128px;
  height: 49px;
  padding-left: 5px;
  border-radius: 8px;
  background: #f8f9f9;
  box-shadow: 0 4px 12px rgba(0, 0, 0, 0.25);
}
.tray button {
  width: 38px;
  height: 38px;
  border-radius: 4px;
}
.tray .on {
  border: 1px solid #ececec;
  background: #fcfcfc;
}
.watermark {
  position: absolute;
  left: 1599px;
  top: 937px;
  color: #a9abad;
  font-family: "Open Sans", "Noto Sans", sans-serif;
  font-size: 14px;
  white-space: nowrap;
  opacity: 0.85;
}
.wm-title {
  font-size: 19px;
  line-height: 26px;
}
</style>
